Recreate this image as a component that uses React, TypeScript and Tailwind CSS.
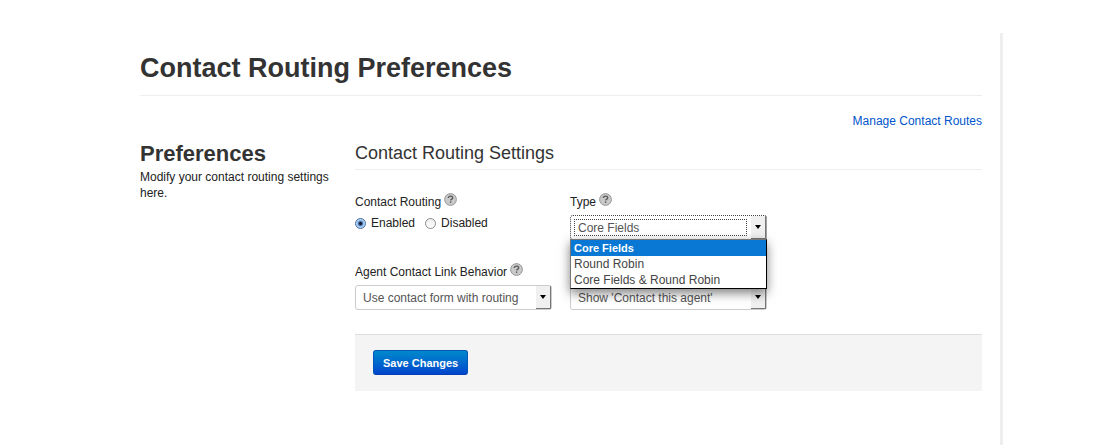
import { useState } from 'react';
import type { ReactNode } from 'react';

interface SelectFieldProps {
  id: string;
  label: string;
  options: string[];
  value: string;
  onChange: (value: string) => void;
  showLabel?: boolean;
  focused?: boolean;
  children?: ReactNode;
}

function HelpIcon() {
  return (
    <svg width="13" height="13" viewBox="0 0 13 13" className="mb-1 shrink-0" aria-hidden="true">
      <circle cx="6.5" cy="6.5" r="5.9" fill="#c9c9c9" stroke="#989898" strokeWidth="1" />
      <path
        d="M4.3 5.1C4.3 3.8 5.2 3.2 6.5 3.2S8.7 3.9 8.7 4.9C8.7 6.1 6.6 6.2 6.6 7.6"
        fill="none"
        stroke="#5a5a5a"
        strokeWidth="1.3"
      />
      <rect x="5.9" y="8.5" width="1.4" height="1.4" fill="#5a5a5a" />
    </svg>
  );
}

function SelectField({ id, label, options, value, onChange, showLabel = true, focused = false, children }: SelectFieldProps) {
  return (
    <div className="flex flex-col justify-end gap-[5px]">
      {showLabel && (
        <div className="flex h-[19px] items-end gap-[3px]">
          <label htmlFor={id}>{label}</label>
          <HelpIcon />
        </div>
      )}
      <div className="relative">
        <select
          id={id}
          aria-label={showLabel ? undefined : label}
          value={value}
          onChange={(e) => onChange(e.target.value)}
          className={`block h-[25px] w-full appearance-none rounded-[3px] border bg-white pl-[7px] pr-5 text-[12px] text-[#555] outline-none ${focused ? 'border-dotted border-[#444]' : 'border-[#ccc]'}`}
        >
          {options.map((option) => (
            <option key={option}>{option}</option>
          ))}
        </select>
        {focused && (
          <span className="pointer-events-none absolute inset-y-1 left-1 right-5 border border-dotted border-[#444]" />
        )}
        <span className="pointer-events-none absolute inset-y-px right-px flex w-[15px] items-center justify-center border-b border-r border-[#777] bg-[#f0f0f0]">
          <svg width="6" height="4" viewBox="0 0 6 4" aria-hidden="true">
            <path d="M0 0H6L3 4Z" fill="#000" />
          </svg>
        </span>
        {children}
      </div>
    </div>
  );
}

const TYPES = ['Core Fields', 'Round Robin', 'Core Fields & Round Robin'];

const RADIO =
  'size-[11px] appearance-none rounded-full border border-[#8b8b8b] bg-white bg-linear-to-b from-[#eee] to-white checked:border-[#4b6a9b] checked:bg-[radial-gradient(circle,#101c38_0_1px,#8fbdf0_3px,#cfe7ff_5px)]';

export default function App() {
  const [enabled, setEnabled] = useState(true);
  const [type, setType] = useState(TYPES[0]);
  const [behavior, setBehavior] = useState('Use contact form with routing');
  const [display, setDisplay] = useState("Show 'Contact this agent'");
  const [open, setOpen] = useState(true);

  return (
    <div className="min-h-screen bg-white pt-[33px] font-['Liberation_Sans',Arial,sans-serif] text-[12px] leading-4 text-[#222]">
      <main className="ml-[122px] mr-[111px] min-h-[calc(100vh-33px)] border-r-[3px] border-[#eceef0] px-[18px] pt-[18px]">
        <h1 className="border-b border-[#eee] pb-[10px] text-[27px] font-bold leading-[34px] text-[#333]">
          Contact Routing Preferences
        </h1>
        <div className="flex justify-end pt-[17px]">
          <a href="#routes" className="text-[#0055cc]">Manage Contact Routes</a>
        </div>

        <div className="mt-[11px] flex gap-6">
          <aside className="w-[191px] shrink-0">
            <h2 className="pb-px text-[22px] font-bold leading-7 text-[#333]">Preferences</h2>
            <p>Modify your contact routing settings here.</p>
          </aside>

          <form className="min-w-0 flex-1" onSubmit={(e) => e.preventDefault()}>
            <h3 className="border-b border-[#eee] pb-[3px] text-[18px] leading-[26px] text-[#333]">
              Contact Routing Settings
            </h3>

            <div className="mt-[21px] grid grid-cols-[197px_197px] gap-x-[18px] gap-y-[21px]">
              <fieldset>
                <legend className="flex h-[19px] items-end gap-[3px]">
                  Contact Routing
                  <HelpIcon />
                </legend>
                <div className="mt-[5px] flex gap-[10px]">
                  <label className="flex items-center gap-[5px]">
                    <input type="radio" name="routing" checked={enabled} onChange={() => setEnabled(true)} className={RADIO} />
                    Enabled
                  </label>
                  <label className="flex items-center gap-[5px]">
                    <input type="radio" name="routing" checked={!enabled} onChange={() => setEnabled(false)} className={RADIO} />
                    Disabled
                  </label>
                </div>
              </fieldset>

              <SelectField id="type" label="Type" options={TYPES} value={type} onChange={setType} focused>
                {open && (
                  <ul
                    role="listbox"
                    aria-label="Type options"
                    className="absolute inset-x-0 top-full z-10 -mt-px border border-black border-l-[#777] border-t-[#777] bg-white text-[#444] shadow-[0_4px_10px_rgba(0,0,0,0.5)]"
                  >
                    {TYPES.map((option) => (
                      <li
                        key={option}
                        role="option"
                        aria-selected={option === type}
                        onClick={() => {
                          setType(option);
                          setOpen(false);
                        }}
                        className="px-[3px] aria-selected:bg-[#0878d4] aria-selected:text-[11px] aria-selected:font-bold aria-selected:text-white"
                      >
                        {option}
                      </li>
                    ))}
                  </ul>
                )}
              </SelectField>

              <SelectField
                id="behavior"
                label="Agent Contact Link Behavior"
                options={['Use contact form with routing']}
                value={behavior}
                onChange={setBehavior}
              />
              <SelectField
                id="display"
                label="Contact link display"
                options={["Show 'Contact this agent'"]}
                value={display}
                onChange={setDisplay}
                showLabel={false}
              />
            </div>

            <div className="mt-6 border-t border-[#ddd] bg-[#f4f4f4] px-[18px] pb-4 pt-[15px]">
              <button
                type="submit"
                className="block h-[25px] rounded-[3px] border border-[#0057b8] border-b-[#003fb3] bg-linear-to-b from-[#0088cc] to-[#0044cc] px-[9px] text-[11px] font-bold text-white"
              >
                Save Changes
              </button>
            </div>
          </form>
        </div>
      </main>
    </div>
  );
}
